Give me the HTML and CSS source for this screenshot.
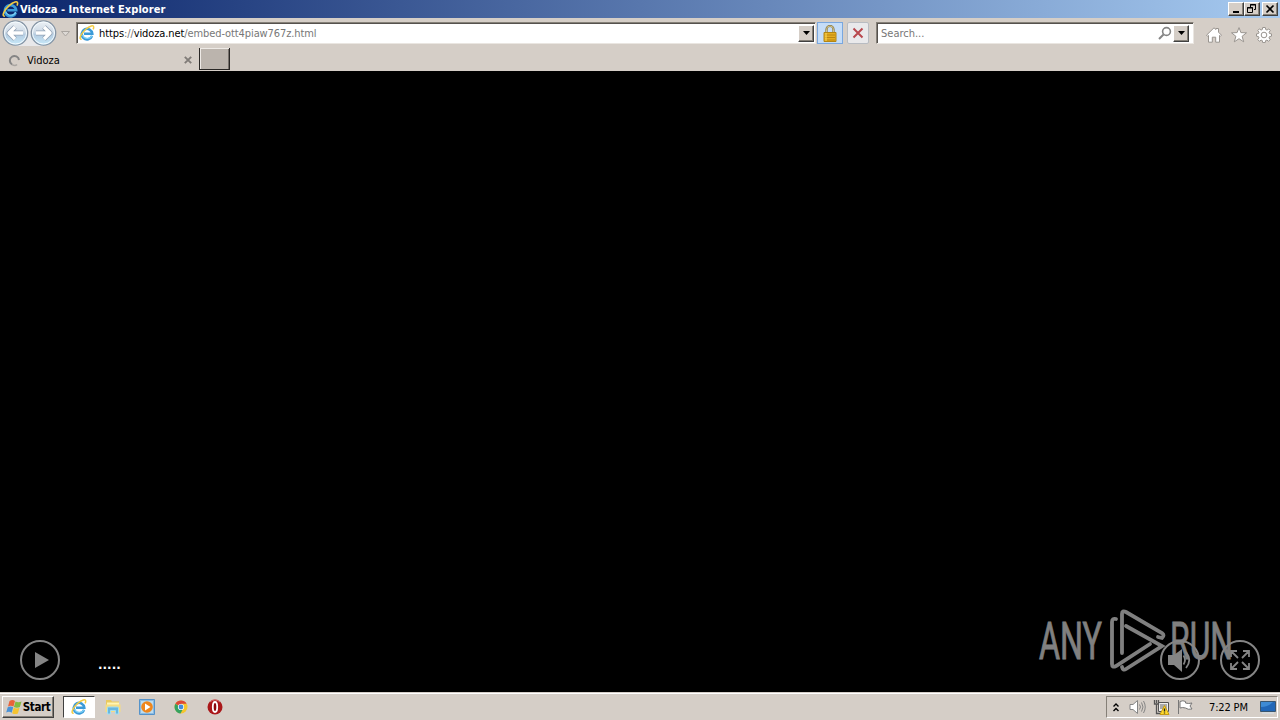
FILE: index.html
```html
<!DOCTYPE html>
<html lang="en">
<head>
<meta charset="utf-8">
<title>Vidoza - Internet Explorer</title>
<link rel="stylesheet" href="styles.css">
</head>
<body>
<svg class="defs" width="0" height="0">
    <linearGradient id="ball" x1="0" y1="0" x2="0" y2="1">
        <stop offset="0" stop-color="#eef2f6"/>
        <stop offset=".5" stop-color="#cbd8e5"/>
        <stop offset=".55" stop-color="#b4cbe0"/>
        <stop offset="1" stop-color="#c8eafa"/>
    </linearGradient>
    <symbol id="ie" viewBox="0 0 16 16">
        <path d="M13 11A5.300 5.300 0 1 1 13.300 8.700H5" fill="none" stroke="#3b9ad8" stroke-width="2.500"/>
        <path d="M13 10.500A5.200 5.200 0 0 1 3.500 10" fill="none" stroke="#7bcff5" stroke-width="1.200"/>
        <path d="M2.700 14.300C-.8 14.600 2 8.500 6.500 4.500S14.700-.3 14.700 2.200c0 .8-.3 1.600-.6 2.100" fill="none" stroke="#f3cb42" stroke-width="1.500"/>
    </symbol>
    <symbol id="down" viewBox="0 0 7 4"><path d="M0 0h7L3.500 4z"/></symbol>
</svg>

<div class="titlebar">
    <svg class="title-icon" width="17" height="17"><use href="#ie"/></svg>
    <span class="title">Vidoza - Internet Explorer</span>
    <div class="window-buttons">
        <button class="btn"><svg width="12" height="10"><path d="M3 7h6v2H3z"/></svg></button>
        <button class="btn"><svg width="12" height="10" fill="none" stroke="#000"><path d="M4.500 3V.5h5v5H8M4 1h6M1.500 3.500h5v5h-5zM1 4h6"/></svg></button>
        <button class="btn close"><svg width="12" height="10"><path d="M2.500 1.500l7 7m0-7l-7 7" stroke="#000" stroke-width="1.700"/></svg></button>
    </div>
</div>

<div class="navbar">
    <svg class="travel" width="74" height="30">
        <path d="M15 3h28v25H15z" fill="#e8e8ea"/>
        <circle cx="15.500" cy="15" r="12.200" fill="url(#ball)" stroke="#8594a4" stroke-width="1.300"/>
        <circle cx="43.500" cy="15" r="12.200" fill="url(#ball)" stroke="#8594a4" stroke-width="1.300"/>
        <circle cx="15.500" cy="15" r="11" fill="none" stroke="#f4fbff"/>
        <circle cx="43.500" cy="15" r="11" fill="none" stroke="#f4fbff"/>
        <g fill="none" stroke-linejoin="round">
            <path d="M23 15H9m6-6L9 15l6 6M36 15h14m-6-6l6 6-6 6" stroke="#91a2b5" stroke-width="5"/>
            <path d="M23 15H9m6-6L9 15l6 6M36 15h14m-6-6l6 6-6 6" stroke="#fff" stroke-width="3.400"/>
        </g>
        <path d="M61.500 13.500h8l-4 4.500z" fill="#ddd9d5" stroke="#aaa5a0"/>
    </svg>
    <div class="field address">
        <svg class="ie" width="16" height="16"><use href="#ie"/></svg>
        <span class="url"><b>https</b>://<b>vidoza.net</b>/embed-ott4piaw767z.html</span>
        <button class="btn drop"><svg width="7" height="4"><use href="#down"/></svg></button>
    </div>
    <div class="lock">
        <svg width="14" height="17">
            <path d="M3.500 8V4.500a3.500 3.500 0 0 1 7 0V8" fill="none" stroke="#87753c" stroke-width="2.200"/>
            <path d="M3.500 8V4.500a3.500 3.500 0 0 1 7 0V8" fill="none" stroke="#dfd6a2" stroke-width=".8"/>
            <path d="M1 7.500h12v9H1z" fill="#e4ad20" stroke="#b28514"/>
            <path d="M2 10h10M2 12.500h10M2 15h10" stroke="#bb8610"/>
            <path d="M3 8v8" stroke="#ffdc5b"/>
        </svg>
    </div>
    <div class="stop">
        <svg width="12" height="12"><path d="M1.500 1.500l9 9m0-9l-9 9" stroke="#b8484e" stroke-width="2"/></svg>
    </div>
    <div class="field search">
        <span>Search...</span>
        <svg width="14" height="14" fill="none" stroke="#858585"><circle cx="8.500" cy="5.500" r="3.900" stroke-width="1.600"/><path d="M5.500 8.500L1 13" stroke-width="2"/></svg>
        <button class="btn drop"><svg width="7" height="4"><use href="#down"/></svg></button>
    </div>
    <div class="commands">
        <svg width="16" height="16" viewBox="0 0 16 16"><path d="M8 .8l2 1.700v-1h2.500v3.700l3 3-1 1-1-.8v6.800H9.700v-5H6.300v5H2.500V8.400l-1 .8-1-1z"/></svg>
        <svg width="16" height="16" viewBox="0 0 16 16"><path d="M8 .6l1.900 5 5.600.2-4.400 3.500 1.600 5.500L8 11.700l-4.700 3.100 1.600-5.500L.5 5.800l5.600-.2z"/></svg>
        <svg width="16" height="16" viewBox="0 0 16 16"><path d="M6.700.5h2.600l.4 2 1.300.6 1.800-1.200 1.500 1.600-1.200 1.700.4 1.300 2 .4v2.300l-2 .4-.5 1.300 1.200 1.700-1.600 1.700-1.700-1.200-1.300.5-.4 2H6.700l-.4-2-1.200-.5-1.700 1.200-1.600-1.700L3 10.900l-.5-1.300-2-.4V6.900l2-.4.5-1.300-1.200-1.700 1.600-1.600 1.700 1.200 1.200-.6z"/><circle cx="8" cy="8" r="2.800"/></svg>
    </div>
</div>

<div class="tabs">
    <div class="tab">
        <svg width="13" height="13"><path d="M4 10.500A4.600 4.600 0 1 1 11 6" fill="none" stroke="#858585" stroke-width="2"/><path d="M4 10.500q3 2 5 0" fill="none" stroke="#aaa6a2" stroke-width="1.600"/></svg>
        <span>Vidoza</span>
        <svg class="tab-close" width="8" height="8"><path d="M.8.800l6.400 6.400m0-6.400L.8 7.200" stroke="#807c78" stroke-width="1.900"/></svg>
    </div>
    <div class="new-tab"></div>
</div>

<div class="player">
    <svg class="watermark" width="210" height="70">
        <text x="3" y="55" textLength="63" lengthAdjust="spacingAndGlyphs">ANY</text>
        <text x="134" y="55" textLength="63" lengthAdjust="spacingAndGlyphs">RUN</text>
        <g class="mark-lines">
            <path d="M86 49V10q0-4 4-2l36 21q3 2 0 5l-4-1"/>
            <path d="M80 15q-4-1-4 3v42q0 4 4 2l34-22"/>
            <path d="M90 22l36 20-36 23q-3 2-4-2"/>
        </g>
    </svg>
    <svg class="control play" width="40" height="40"><circle cx="20" cy="20" r="19"/><path class="solid" d="M15 12l14 8-14 8z"/></svg>
    <span class="time">.....</span>
    <svg class="control sound" width="40" height="40"><circle cx="20" cy="20" r="19"/><path class="solid" d="M8 15h6l8-6v23l-8-7H8z"/><path d="M23.500 15.500q3 4.500 0 9M26 12q6.500 8 0 16" stroke-width="1.800"/></svg>
    <svg class="control full" width="40" height="40"><circle cx="20" cy="20" r="19"/><path d="M11 17v-6h6M23 11h6v6M29 23v6h-6M17 29h-6v-6M11 11l7 7M29 11l-7 7M29 29l-7-7M11 29l7-7" stroke-width="1.800"/></svg>
</div>

<div class="taskbar">
    <button class="btn start">
        <svg width="17" height="16"><path d="M3.500 2q3-2 5.500 0L7.500 7.500q-3-1.500-5.500 0z" fill="#e9633a"/><path d="M9.500 2.600q3 1.500 6 0l-1.600 5.500q-3 1.500-6 0z" fill="#82bc42"/><path d="M1.700 8.200q3-1.600 5.500 0l-1.500 5.500q-2.500-1.700-5.500-.2z" fill="#4a92d7"/><path d="M7.700 8.800q3 1.500 5.800 0l-1.600 5.600q-3 1.400-5.700-.2z" fill="#f5c431"/></svg>
        <span>Start</span>
    </button>
    <div class="task active"><svg width="16" height="16"><use href="#ie"/></svg></div>
    <div class="task">
        <svg width="16" height="16"><path d="M1 1h5l1 1.500h7V12H1z" fill="#e9c95f"/><path d="M2 3.500h12V7H2z" fill="#fff5b2"/><path d="M.5 5.500h15V13H.500z" fill="#f4dc83"/><path d="M2.500 15V9q0-1 1-1h9q1 0 1 1v6h-3v-3.500h-5V15z" fill="#69b7df" stroke="#a2def2"/></svg>
    </div>
    <div class="task">
        <svg width="16" height="16"><path d="M.5.500h15v15H.500z" fill="#8bbbe2" stroke="#5593ca"/><path d="M2 2h12v12H2z" fill="#bcdcf0"/><circle cx="8" cy="8" r="5.800" fill="#ef861c"/><path d="M6 4.500l5.500 3.500L6 11.500z" fill="#fff"/></svg>
    </div>
    <div class="task">
        <svg width="14" height="14"><circle cx="7" cy="7" r="6.500" fill="#f5c62d"/><path d="M7 7L1.400 3.700A6.500 6.500 0 0 1 12.600 3.700H7z" fill="#dd4738"/><path d="M1.400 3.700A6.500 6.500 0 0 0 6.500 13.500L9 9z" fill="#35a260"/><circle cx="7" cy="7" r="3.100" fill="#fff"/><circle cx="7" cy="7" r="2.400" fill="#438bdc"/></svg>
    </div>
    <div class="task">
        <svg width="16" height="16"><circle cx="8" cy="8" r="7.500" fill="#aa1719"/><path d="M3 3a7 7 0 0 1 10 0" fill="none" stroke="#dd7776"/><ellipse cx="8" cy="8" rx="2.200" ry="5" fill="#8c090d" stroke="#fff" stroke-width="1.800"/></svg>
    </div>
    <div class="tray">
        <svg class="chevron" width="6" height="9" fill="none" stroke="#000" stroke-width="1.400"><path d="M.5 3.500L3 1l2.500 2.500M.5 8L3 5.500 5.500 8"/></svg>
        <svg class="volume" width="17" height="16" fill="none" stroke="#858585"><path d="M1 5.500h3L8.500 1.500v13L4 10.500H1z" fill="#fff"/><path d="M10.500 5.500q2 2.500 0 5M12.500 3.500q3 4.500 0 9M14.500 2q3.500 6 0 12"/></svg>
        <svg class="network" width="17" height="16"><path d="M5.500 3.500h10v9h-10z" fill="#eee" stroke="#555"/><path d="M7 5h7v5H7z" fill="#aaa"/><path d="M1.500 1v4h4V1M3.500 1v3M3.500 5v9.500h6" fill="none" stroke="#555" stroke-width="1.300"/><path d="M11.500 6.500l4.500 9H7z" fill="#ffda2b" stroke="#c69b13"/><path d="M11.500 9.500v3M11.500 13.500v1" stroke="#222" stroke-width="1.400"/></svg>
        <svg class="flag" width="17" height="16"><path d="M1.500 1v14M3 2.500q3-1.500 5.500 0V4q3 1 6.500 0l-2 3 2 3q-4 1-6.500-1-3-1-5.500 0z" fill="#fff" stroke="#777"/></svg>
        <span class="clock">7:22 PM</span>
        <svg class="desktop" width="16" height="13"><path d="M.5.500h15v10H.500z" fill="#2167b7" stroke="#39566f"/><path d="M1 6q7 0 12-5H1z" fill="#3e8bd4"/><path d="M2 12h12" stroke="#d5e4ef"/></svg>
    </div>
</div>
</body>
</html>
```
FILE: styles.css
```css
* {
  box-sizing: border-box;
}

body {
  margin: 0;
  width: 1280px;
  height: 720px;
  display: flex;
  flex-direction: column;
  overflow: hidden;
  background: #d5cec7;
  color: #000;
  font: 11px "DejaVu Sans Condensed", "DejaVu Sans", sans-serif;
}

svg {
  display: block;
  flex: none;
}

.defs {
  position: absolute;
}

.btn {
  display: flex;
  align-items: center;
  justify-content: center;
  padding: 0;
  background: #d5cec7;
  border: 1px solid;
  border-color: #fff #404040 #404040 #fff;
  box-shadow: inset -1px -1px #858078;
  font: inherit;
}

.titlebar {
  height: 18px;
  display: flex;
  align-items: center;
  padding: 0 2px;
  background: linear-gradient(to right, #0a246a, #a6caf0);
  color: #fff;
}

.title {
  margin-left: 1px;
  font-weight: bold;
  letter-spacing: 0.05px;
}

.window-buttons {
  display: flex;
  margin-left: auto;
}

.window-buttons .btn {
  width: 16px;
  height: 14px;
}

.window-buttons .close {
  margin-left: 2px;
}

.navbar {
  height: 30px;
  display: flex;
  align-items: flex-start;
}

.travel {
  margin-right: 2px;
}

.field {
  display: flex;
  align-items: center;
  height: 22px;
  margin-top: 4px;
  background: #fff;
  border: 1px solid;
  border-color: #858078 #eae6e1 #eae6e1 #858078;
  box-shadow: inset 1px 1px #55514d;
  color: #777;
}

.address {
  width: 740px;
  padding: 0 1px 0 2px;
}

.url {
  margin-left: 4px;
  letter-spacing: -0.1px;
}

.url b {
  font-weight: normal;
  color: #000;
}

.drop {
  width: 16px;
  height: 17px;
}

.address .drop {
  margin-left: auto;
}

.lock {
  width: 26px;
  height: 22px;
  margin: 4px 0 0 1px;
  display: grid;
  place-items: center;
  background: #c5ddf8;
  border: 1px solid #79a7df;
}

.stop {
  width: 22px;
  height: 22px;
  margin: 4px 7px 0 4px;
  display: grid;
  place-items: center;
  background: #e9e9eb;
  border: 1px solid #b8bcc2;
  border-radius: 2px;
}

.search {
  width: 318px;
  padding: 0 4px;
}

.search svg {
  margin-left: auto;
}

.search .drop {
  margin-left: 1px;
}

.search .drop svg {
  margin: 0;
}

.commands {
  display: flex;
  gap: 9px;
  margin: 9px 0 0 12px;
}

.commands svg {
  fill: #fff;
  stroke: #99948f;
}

.tabs {
  height: 23px;
  display: flex;
}

.tab {
  width: 199px;
  display: flex;
  align-items: center;
  padding: 1px 7px 0 8px;
}

.tab span {
  margin-left: 6px;
}

.tab-close {
  margin-left: auto;
}

.new-tab {
  width: 31px;
  height: 22px;
  background: #bbb4ad;
  border: solid #292725;
  border-width: 0 1px 1px 1px;
  box-shadow: inset 1px 1px #eeeae6, inset -1px 0 #77716c;
}

/* video area */
.player {
  height: 621px;
  position: relative;
  background: #000;
}

.control {
  position: absolute;
  bottom: 12px;
  fill: none;
  stroke: #858585;
  stroke-width: 2;
}

.control .solid {
  fill: #858585;
  stroke: none;
}

.play {
  left: 20px;
}

.sound {
  right: 80px;
}

.full {
  right: 20px;
}

.time {
  position: absolute;
  left: 98px;
  bottom: 20px;
  color: #fff;
  font: bold 12px "DejaVu Sans", sans-serif;
}

.watermark {
  position: absolute;
  right: 34px;
  bottom: 18px;
  opacity: 0.5;
  fill: #fff;
  font: 52px Roboto, sans-serif;
}

.watermark text {
  stroke: #fff;
  stroke-width: 0.8;
}

.mark-lines {
  fill: none;
  stroke: #fff;
  stroke-width: 3.8;
  stroke-linecap: round;
}

.taskbar {
  height: 28px;
  display: flex;
  align-items: flex-start;
  padding: 3px 2px 0;
  border-top: 1px solid #d5cec7;
  box-shadow: inset 0 1px #fff;
}

.start {
  width: 52px;
  height: 22px;
  margin-right: 9px;
  font-weight: bold;
  font-size: 11.5px;
  letter-spacing: -0.4px;
}

.task {
  width: 32px;
  height: 22px;
  margin-right: 2px;
  display: grid;
  place-items: center;
}

.active {
  background: #fff;
  border: 1px solid;
  border-color: #404040 #fff #fff #404040;
}

.tray {
  width: 172px;
  height: 22px;
  margin-left: auto;
  display: flex;
  align-items: center;
  padding: 0 1px 0 6px;
  border: 1px solid;
  border-color: #858078 #fff #fff #858078;
}

.volume {
  margin-left: 10px;
}

.network {
  margin-left: 7px;
}

.flag {
  margin-left: 7px;
}

.clock {
  margin-left: 15px;
  letter-spacing: -0.15px;
}

.desktop {
  margin-left: auto;
}
```
